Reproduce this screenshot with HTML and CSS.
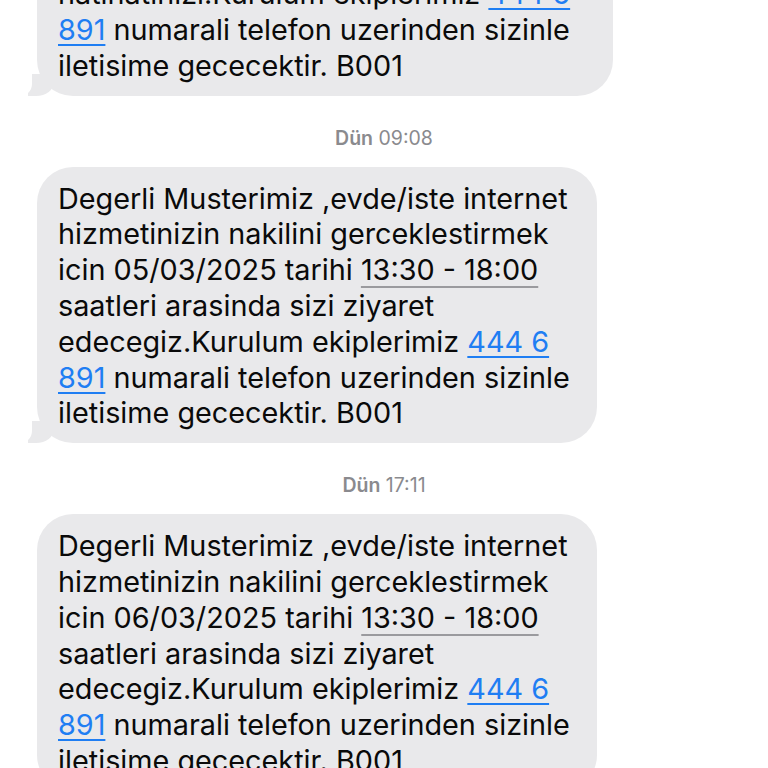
FILE: index.html
```html
<!DOCTYPE html>
<html lang="tr">
<head>
<meta charset="utf-8">
<link rel="stylesheet" href="styles.css">
</head>
<body>
<div class="thread">
  <div class="bubble first">
    Degerli Musterimiz ,evde/iste internet<br>
    hizmetinizin nakilini gerceklestirmek<br>
    icin 04/03/2025 tarihi <span class="time">13:30 - 18:00</span><br>
    saatleri arasinda sizi ziyaret edecegiz.<br>
    hatinatinizi.Kurulum ekiplerimiz <a class="link">444 6</a><br>
    <a class="link">891</a> numarali telefon uzerinden sizinle<br>
    iletisime gececektir. B001
  </div>
  <div class="stamp"><b>Dün</b> 09:08</div>
  <div class="bubble">
    Degerli Musterimiz ,evde/iste internet<br>
    hizmetinizin nakilini gerceklestirmek<br>
    icin 05/03/2025 tarihi <span class="time">13:30 - 18:00</span><br>
    saatleri arasinda sizi ziyaret<br>
    edecegiz.Kurulum ekiplerimiz <a class="link">444 6</a><br>
    <a class="link">891</a> numarali telefon uzerinden sizinle<br>
    iletisime gececektir. B001
  </div>
  <div class="stamp"><b>Dün</b> 17:11</div>
  <div class="bubble">
    Degerli Musterimiz ,evde/iste internet<br>
    hizmetinizin nakilini gerceklestirmek<br>
    icin 06/03/2025 tarihi <span class="time">13:30 - 18:00</span><br>
    saatleri arasinda sizi ziyaret<br>
    edecegiz.Kurulum ekiplerimiz <a class="link">444 6</a><br>
    <a class="link">891</a> numarali telefon uzerinden sizinle<br>
    iletisime gececektir. B001
  </div>
</div>
</body>
</html>
```
FILE: styles.css
```css
html, body {
  margin: 0;
  padding: 0;
  background: #ffffff;
  overflow: hidden;
}
body {
  width: 768px;
  height: 768px;
  font-family: Inter, "Liberation Sans", sans-serif;
}
.thread {
  display: flex;
  flex-direction: column;
  align-items: flex-start;
  padding-left: 37px;
}
.bubble {
  position: relative;
  background: #e9e9eb;
  color: #0a0a0a;
  font-size: 28.8px;
  line-height: 35.8px;
  padding: 14px 27px 12px 21px;
  border-radius: 36px;
  white-space: nowrap;
}
.bubble.first {
  margin-top: -181px;
  padding-right: 37px;
}
.bubble::before {
  content: "";
  position: absolute;
  bottom: 0;
  left: -9px;
  width: 26px;
  height: 22px;
  background: #e9e9eb;
  border-bottom-right-radius: 18px 14px;
}
.bubble::after {
  content: "";
  position: absolute;
  bottom: 0;
  left: -31px;
  width: 26px;
  height: 24px;
  background: #ffffff;
  border-bottom-right-radius: 12px;
}
.link {
  color: #1f7ef3;
  text-decoration: underline;
  text-decoration-thickness: 2px;
  text-underline-offset: 4px;
}
.time {
  text-decoration: underline;
  text-decoration-color: #9a9a9e;
  text-decoration-thickness: 2px;
  text-underline-offset: 6px;
}
.stamp {
  align-self: stretch;
  margin-left: -37px;
  text-align: center;
  color: #8a8a8e;
  font-size: 19.5px;
  line-height: 22px;
  margin-top: 31px;
  margin-bottom: 18px;
}
.stamp b {
  font-weight: 600;
}
```
